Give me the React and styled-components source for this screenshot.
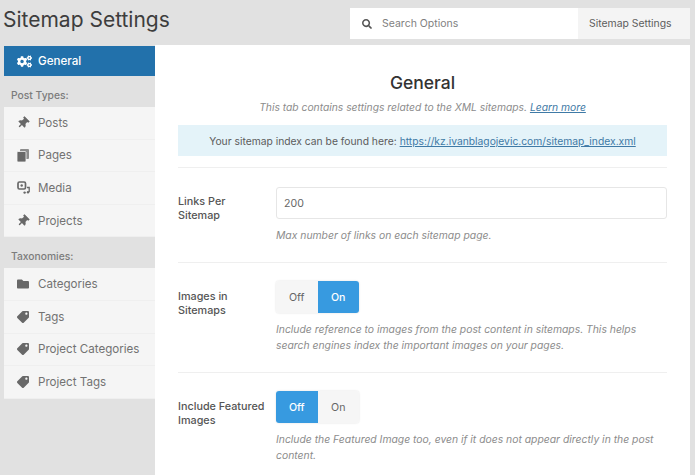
import React from 'react';
import styled, { createGlobalStyle } from 'styled-components';
import { FaCogs, FaThumbtack, FaFolder, FaTag, FaSearch } from 'react-icons/fa';

const GlobalStyle = createGlobalStyle`
  html, body {
    margin: 0;
    height: 100%;
    overflow: hidden;
    background: #e1e1e1;
    font-family: Inter, "Liberation Sans", sans-serif;
  }
`;

const Page = styled.div`
  width: 695px;
  height: 475px;
  overflow: hidden;
  background: #e1e1e1;
  color: #444;
`;

const Header = styled.header`
  display: flex;
  justify-content: space-between;
  height: 45px;
  padding: 8px 5px 0 3px;
  box-sizing: border-box;
`;

const PageTitle = styled.h1`
  margin: 0;
  font-size: 21px;
  line-height: 24px;
  font-weight: 400;
  color: #3d3d3d;
`;

const SearchBar = styled.div`
  display: flex;
  width: 340px;
  height: 31px;
  background: #fff;
`;

const SearchField = styled.div`
  flex: 1;
  display: flex;
  align-items: center;
  gap: 10px;
  padding-left: 12px;
  font-size: 10.5px;
  color: #7f7f7f;
  svg { color: #555; font-size: 10px; }
`;

const SearchScope = styled.div`
  width: 112px;
  box-sizing: border-box;
  padding-left: 11px;
  display: flex;
  align-items: center;
  background: #f4f4f4;
  font-size: 10.4px;
  color: #5c5c5c;
`;

const Body = styled.div`
  display: flex;
  padding-left: 4px;
  padding-right: 5px;
`;

const Sidebar = styled.nav`
  width: 151px;
  flex: none;
  padding-top: 1px;
`;

const GroupLabel = styled.div`
  height: 31px;
  box-sizing: border-box;
  padding: 6px 7px 0;
  display: flex;
  align-items: center;
  font-size: 10.3px;
  font-weight: 500;
  color: #7c7c7c;
  background: #e1e1e1;
`;

const NavItem = styled.div`
  height: ${p => (p.$active ? '30px' : '32.6px')};
  display: flex;
  align-items: center;
  box-sizing: border-box;
  padding-left: 13px;
  font-size: 11.6px;
  font-weight: ${p => (p.$active ? 500 : 400)};
  color: ${p => (p.$active ? '#fff' : '#727272')};
  background: ${p => (p.$active ? '#2271ab' : '#f5f5f5')};
  border-bottom: ${p => (p.$active ? 'none' : '1px solid #efefef')};
`;

const NavIcon = styled.span`
  width: 21px;
  flex: none;
  display: flex;
  align-items: center;
  font-size: ${p => p.$size || 12}px;
  color: ${p => (p.$active ? '#fff' : '#686868')};
  svg { transform: ${p => p.$turn || 'none'}; }
`;

const Main = styled.main`
  flex: 1;
  background: #fff;
  height: 430px;
  padding: 0 23px;
  box-sizing: border-box;
  overflow: hidden;
`;

const Heading = styled.h2`
  margin: 0;
  padding-top: 28px;
  text-align: center;
  font-size: 17.5px;
  line-height: 20px;
  font-weight: 500;
  color: #333;
`;

const Lead = styled.p`
  margin: 7px 0 0;
  text-align: center;
  font-size: 10.3px;
  line-height: 14px;
  font-style: italic;
  color: #8c8c8c;
  a { color: #3f7aa6; }
`;

const Notice = styled.div`
  margin-top: 11px;
  height: 31px;
  display: flex;
  align-items: center;
  justify-content: center;
  background: #e4f3f9;
  font-size: 10.3px;
  color: #5c5c5c;
  a { color: #3f7aa6; margin-left: 3px; }
`;

const Row = styled.section`
  display: grid;
  grid-template-columns: 98px 1fr;
  border-top: 1px solid #efefef;
  margin-top: ${p => p.$gap}px;
  padding-top: ${p => p.$top}px;
`;

const RowLabel = styled.div`
  font-size: 10.8px;
  line-height: 14px;
  font-weight: 500;
  color: #555;
  padding-top: ${p => p.$top}px;
`;

const TextInput = styled.div`
  height: 32px;
  box-sizing: border-box;
  border: 1px solid #e6e6e6;
  border-radius: 3px;
  display: flex;
  align-items: center;
  padding-left: 7px;
  font-size: 10.6px;
  color: #666;
`;

const Help = styled.p`
  margin: 9px 0 0;
  font-size: 10.37px;
  line-height: 16px;
  font-style: italic;
  color: #8c8c8c;
`;

const Toggle = styled.div`
  display: inline-flex;
  height: 32px;
  border-radius: 3px;
  overflow: hidden;
  box-shadow: 0 0 2px rgba(0, 0, 0, 0.15);
`;

const ToggleOption = styled.div`
  width: 41.5px;
  display: flex;
  align-items: center;
  justify-content: center;
  font-size: 10.6px;
  font-weight: ${p => (p.$on ? 500 : 400)};
  color: ${p => (p.$on ? '#fff' : '#666')};
  background: ${p => (p.$on ? '#379ae0' : '#f6f6f6')};
`;

const PagesIcon = () => (
  <svg width="12" height="13" viewBox="0 0 12 13" fill="currentColor">
    <rect x="3" y="0" width="9" height="10" rx="1" opacity="0.75" />
    <rect x="0" y="2.5" width="9" height="10.5" rx="1" stroke="#f5f5f5" strokeWidth="0.8" />
  </svg>
);

const MediaIcon = () => (
  <svg width="13" height="13" viewBox="0 0 13 13" fill="none" stroke="currentColor">
    <rect x="1" y="1" width="7.5" height="7" rx="1.4" strokeWidth="1.7" />
    <circle cx="4.7" cy="4.5" r="1.2" fill="currentColor" stroke="none" />
    <path d="M10 6.5 H12.2 V11" strokeWidth="1.3" />
    <circle cx="11" cy="11.3" r="1.2" fill="currentColor" stroke="none" />
    <circle cx="7.6" cy="11.6" r="1.2" fill="currentColor" stroke="none" />
  </svg>
);

const postTypes = [
  ['Posts', <FaThumbtack />, 12, 'rotate(45deg)'],
  ['Pages', <PagesIcon />],
  ['Media', <MediaIcon />],
  ['Projects', <FaThumbtack />, 12, 'rotate(45deg)'],
];

const taxonomies = [
  ['Categories', <FaFolder />, 12],
  ['Tags', <FaTag />, 12, 'scaleX(-1)'],
  ['Project Categories', <FaTag />, 12, 'scaleX(-1)'],
  ['Project Tags', <FaTag />, 12, 'scaleX(-1)'],
];

const NavList = ({ items }) =>
  items.map(([label, icon, size, turn]) => (
    <NavItem key={label}>
      <NavIcon $size={size} $turn={turn}>{icon}</NavIcon>
      {label}
    </NavItem>
  ));

const App = () => (
  <Page>
    <GlobalStyle />
    <Header>
      <PageTitle>Sitemap Settings</PageTitle>
      <SearchBar>
        <SearchField><FaSearch />Search Options</SearchField>
        <SearchScope>Sitemap Settings</SearchScope>
      </SearchBar>
    </Header>
    <Body>
      <Sidebar>
        <NavItem $active>
          <NavIcon $active $size={15}><FaCogs /></NavIcon>
          General
        </NavItem>
        <GroupLabel>Post Types:</GroupLabel>
        <NavList items={postTypes} />
        <GroupLabel>Taxonomies:</GroupLabel>
        <NavList items={taxonomies} />
      </Sidebar>
      <Main>
        <Heading>General</Heading>
        <Lead>
          This tab contains settings related to the XML sitemaps. <a href="#more">Learn more</a>
        </Lead>
        <Notice>
          Your sitemap index can be found here:
          <a href="#index">https://kz.ivanblagojevic.com/sitemap_index.xml</a>
        </Notice>
        <Row $gap={11} $top={19}>
          <RowLabel $top={8}>Links Per<br />Sitemap</RowLabel>
          <div>
            <TextInput>200</TextInput>
            <Help>Max number of links on each sitemap page.</Help>
          </div>
        </Row>
        <Row $gap={18} $top={18}>
          <RowLabel $top={9}>Images in<br />Sitemaps</RowLabel>
          <div>
            <Toggle>
              <ToggleOption>Off</ToggleOption>
              <ToggleOption $on>On</ToggleOption>
            </Toggle>
            <Help>
              Include reference to images from the post content in sitemaps. This helps<br />
              search engines index the important images on your pages.
            </Help>
          </div>
        </Row>
        <Row $gap={18} $top={18}>
          <RowLabel $top={9}>Include Featured<br />Images</RowLabel>
          <div>
            <Toggle>
              <ToggleOption $on>Off</ToggleOption>
              <ToggleOption>On</ToggleOption>
            </Toggle>
            <Help>
              Include the Featured Image too, even if it does not appear directly in the post<br />
              content.
            </Help>
          </div>
        </Row>
      </Main>
    </Body>
  </Page>
);

export default App;
